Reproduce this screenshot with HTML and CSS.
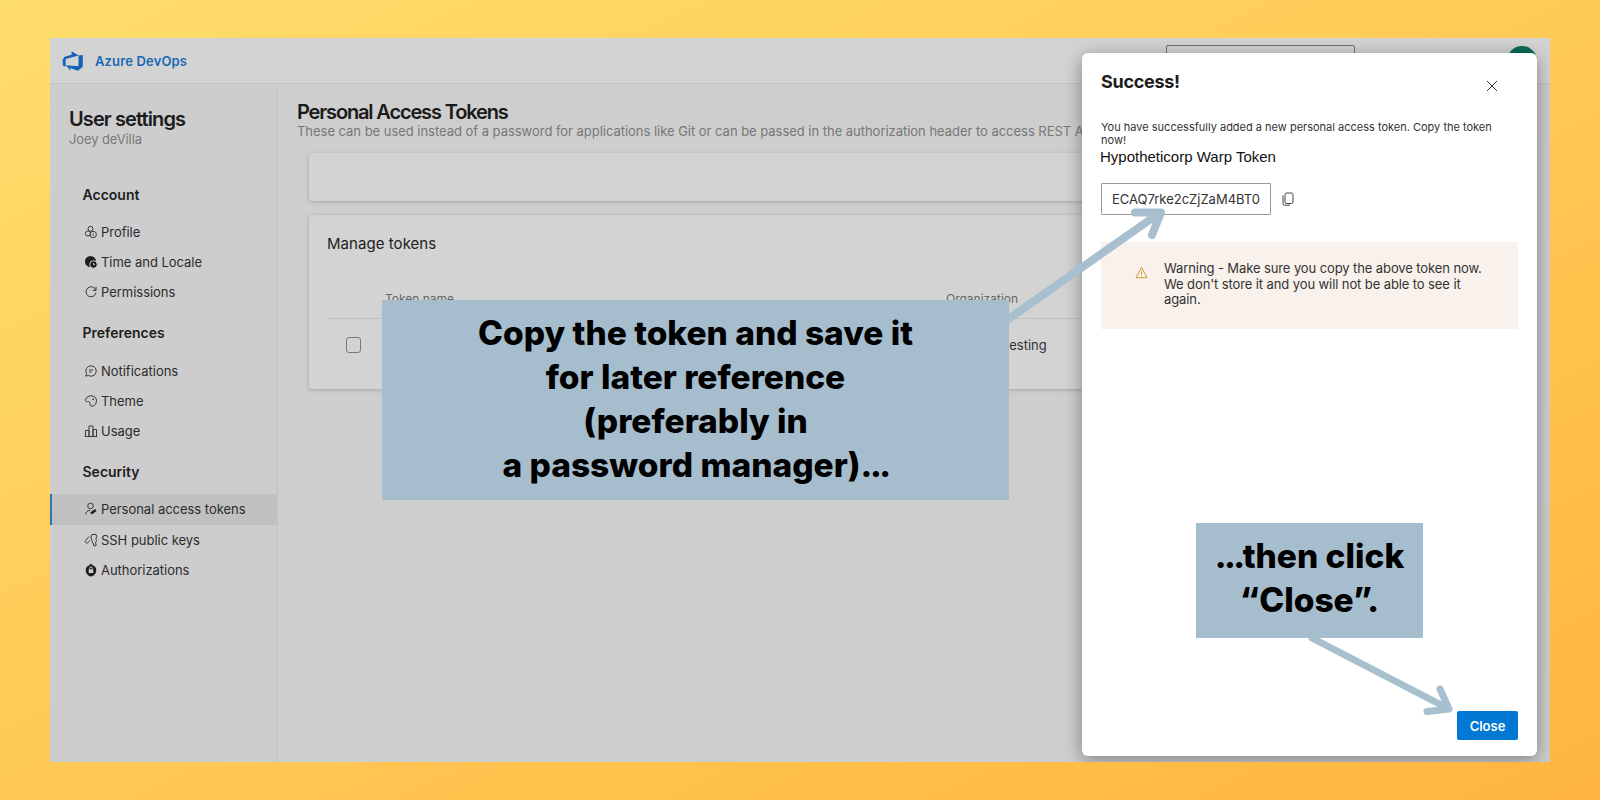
FILE: index.html
```html
<!DOCTYPE html>
<html lang="en">
<head>
    <meta charset="UTF-8">
    <meta name="viewport" content="width=device-width, initial-scale=1.0">
    <title>Personal Access Tokens</title>
    <link rel="stylesheet" href="styles.css">
</head>
<body>
    <div class="stage">
        <div class="window">
            <header class="topbar">
                <svg class="logo" viewBox="0 0 18 18"><path d="M17 4v9.74l-4 3.28-6.2-2.26V17l-3.51-4.59 10.23.8V4.44zm-3.41.49L7.85 1v2.91L2.27 5.55.6 7.72v4.93l2.4 1.06V7.39z"/></svg>
                <span class="brand">Azure DevOps</span>
                <div class="search"></div>
                <div class="avatar"></div>
            </header>

            <div class="page">
                <aside class="sidebar">
                    <h2>User settings</h2>
                    <p class="user">Joey deVilla</p>

                    <h3 class="nav-title first">Account</h3>
                    <a class="nav-item">
                        <svg viewBox="0 0 14 14"><circle cx="6.500" cy="3.800" r="2.500"/><circle cx="4" cy="8.500" r="2.600"/><circle cx="9.200" cy="9.500" r="3.200"/><path d="M9.200 8.500v2.200"/></svg>
                        Profile
                    </a>
                    <a class="nav-item">
                        <svg viewBox="0 0 14 14"><circle class="solid" cx="6.500" cy="6.500" r="5.500"/><circle class="solid halo" cx="9.500" cy="9.500" r="3.800"/><path class="light" d="M9.500 8v1.700h1.300"/></svg>
                        Time and Locale
                    </a>
                    <a class="nav-item">
                        <svg viewBox="0 0 14 14"><path d="M11.800 5.200A5 5 0 1 0 12 7.600"/><path d="M12 1.800v3.600H8.600"/></svg>
                        Permissions
                    </a>

                    <h3 class="nav-title">Preferences</h3>
                    <a class="nav-item">
                        <svg viewBox="0 0 14 14"><path d="M7 1.800a5.200 5.200 0 1 1-2.700 9.600L1.800 12.200l.8-2.500A5.200 5.200 0 0 1 7 1.800z"/><path d="M5 6h4M5 8h2.500"/></svg>
                        Notifications
                    </a>
                    <a class="nav-item">
                        <svg viewBox="0 0 14 14"><path d="M7.200 1.800C3.800 1.800 1.500 4 1.500 6.600c0 .9.9 1.300 1.800 1 1.400-.5 2.600.2 2.600 1.600 0 1.500.4 3 2 3 2.400 0 4.600-2.400 4.600-5.400 0-3-2.200-5-5.300-5z"/><circle class="solid" cx="9.200" cy="5.200" r=".8"/></svg>
                        Theme
                    </a>
                    <a class="nav-item">
                        <svg viewBox="0 0 14 14"><path d="M1.500 12.500V6.500h3.500v6M5 12.500V2h4v10.500M9 12.500V5.500h3.500v7M.8 12.500h12.400"/></svg>
                        Usage
                    </a>

                    <h3 class="nav-title">Security</h3>
                    <a class="nav-item active">
                        <svg viewBox="0 0 14 14"><circle cx="6.500" cy="4" r="2.800"/><path d="M1.800 12.500c0-2.600 1.800-4 4.400-4"/><path class="thick" d="M7 11.500l4.800-3.500"/></svg>
                        Personal access tokens
                    </a>
                    <a class="nav-item">
                        <svg viewBox="0 0 14 14"><path d="M8 1.500h4l.8 2-1 2.500.8 1.500-1 2 .5 3-2 .5-2.200-5.500-1-3z"/><path d="M5 3.500L1 8.500l2 2 2.800-3"/></svg>
                        SSH public keys
                    </a>
                    <a class="nav-item">
                        <svg viewBox="0 0 14 14"><path class="solid" d="M7 .6l1.600 1.700C10.800 2.800 12.300 4.800 12.300 7.200c0 3.100-2.400 5.800-5.300 6.200-2.900-.4-5.300-3.100-5.300-6.200 0-2.400 1.500-4.400 3.700-4.900z"/><rect class="cutout" x="4.700" y="6.300" width="4.600" height="3.700" rx=".5"/><path class="light" d="M5.600 6.200V5.300a1.400 1.400 0 0 1 2.800 0v.9"/></svg>
                        Authorizations
                    </a>
                </aside>

                <main class="content">
                    <h1>Personal Access Tokens</h1>
                    <p class="lead">These can be used instead of a password for applications like Git or can be passed in the authorization header to access REST APIs.</p>

                    <div class="card card-empty"></div>

                    <div class="card card-tokens">
                        <h4>Manage tokens</h4>
                        <div class="token-grid token-head">
                            <span></span>
                            <span>Token name</span>
                            <span>Organization</span>
                        </div>
                        <div class="token-grid token-row">
                            <span class="checkbox"></span>
                            <span></span>
                            <span>joey-dev-testing</span>
                        </div>
                    </div>
                </main>
            </div>

            <section class="modal">
                <div class="modal-head">
                    <h2>Success!</h2>
                    <svg class="close-x" viewBox="0 0 12 12"><path d="M1 1l10 10M11 1L1 11"/></svg>
                </div>
                <p class="modal-text">You have successfully added a new personal access token. Copy the token now!</p>
                <p class="token-name">Hypotheticorp Warp Token</p>
                <div class="token-line">
                    <div class="token-value">ECAQ7rke2cZjZaM4BT0</div>
                    <svg class="copy" viewBox="0 0 12 14"><rect x="3" y="1" width="8" height="10.500" rx="1.500"/><path d="M1 3.500v8A1.800 1.800 0 0 0 2.800 13.200H8"/></svg>
                </div>
                <div class="warning">
                    <svg viewBox="0 0 14 14"><path d="M7 1.600L13 12.600H1z"/><path d="M7 5.500v4M7 10.500v.8"/></svg>
                    <p>Warning - Make sure you copy the above token now. We don't store it and you will not be able to see it again.</p>
                </div>
                <button class="close-btn">Close</button>
            </section>
        </div>

        <svg class="arrows" viewBox="0 0 1600 800">
            <path d="M990 332L1158 214M1135 212.500L1161 212.500L1152 235"/>
            <path class="small" d="M1312 638L1447 708M1440 689L1449 709L1427 711.500"/>
        </svg>

        <div class="callout callout-big"><p>Copy the token and save it<br>for later reference<br>(preferably in<br>a password manager)<span class="dots">...</span></p></div>
        <div class="callout callout-small"><p><span class="dots">...</span>then click<br>“Close”.</p></div>
    </div>
</body>
</html>
```

FILE: styles.css
```css
* {
    box-sizing: border-box;
}

body {
    margin: 0;
    font-family: Inter, "Noto Sans", sans-serif;
}

h1, h2, h3, h4, p {
    margin: 0;
}

.stage {
    position: relative;
    width: 1600px;
    height: 800px;
    padding: 38px 50px;
    overflow: hidden;
    background: linear-gradient(155deg, #ffdd6c 0%, #ffca55 50%, #ffb53f 100%);
}

.window {
    position: relative;
    height: 724px;
    overflow: hidden;
    background: #cecece;
    display: flex;
    flex-direction: column;
}

/* top bar */
.topbar {
    height: 46px;
    flex-shrink: 0;
    display: flex;
    align-items: center;
    padding: 0 13px 0 12px;
    background: #d3d3d3;
    border-bottom: 1px solid #c2c2c2;
}

.logo {
    width: 22px;
    height: 22px;
    fill: #1463b3;
}

.brand {
    margin-left: 11px;
    font-size: 13px;
    font-weight: 600;
    letter-spacing: 0.15px;
    color: #1a68b4;
}

.search {
    margin-left: auto;
    width: 189px;
    height: 32px;
    border: 1px solid #6e6e6e;
    border-radius: 2px;
}

.avatar {
    margin-left: 152px;
    width: 30px;
    height: 30px;
    border-radius: 50%;
    background: #0b6a58;
}

.page {
    flex: 1;
    display: flex;
    min-height: 0;
}

/* sidebar */
.sidebar {
    width: 228px;
    flex-shrink: 0;
    padding-top: 23.5px;
    border-right: 1px solid #c4c4c4;
    background: #cdcdcd;
}

.sidebar h2 {
    margin-left: 19px;
    font-size: 20px;
    line-height: 23px;
    font-weight: 600;
    letter-spacing: -0.9px;
    color: #1c1c1c;
}

.user {
    margin-left: 19px;
    font-size: 13px;
    line-height: 16px;
    letter-spacing: -0.1px;
    color: #7a7a7a;
}

.nav-title {
    margin: 16px 0 12px 32.5px;
    font-size: 14px;
    line-height: 20px;
    font-weight: 600;
    color: #1e1e1e;
}

.nav-title.first {
    margin-top: 38px;
}

.nav-item {
    height: 30.3px;
    display: flex;
    align-items: center;
    gap: 3px;
    padding-left: 34px;
    font-size: 13px;
    letter-spacing: -0.03px;
    color: #2c2c2c;
}

.nav-item.active {
    background: #c1c1c1;
    box-shadow: inset 2px 0 0 #2f73b5;
}

.nav-item svg {
    width: 14px;
    height: 14px;
    fill: none;
    stroke: #3a3a3a;
    stroke-width: 1;
}

.nav-item .solid {
    fill: #1e1e1e;
    stroke: none;
}

.nav-item .halo {
    stroke: #cdcdcd;
    stroke-width: 1;
}

.nav-item .light {
    stroke: #cdcdcd;
}

.nav-item .cutout {
    fill: #cdcdcd;
    stroke: none;
}

.nav-item .thick {
    stroke: #1e1e1e;
    stroke-width: 2.4;
}

/* main column */
.content {
    flex: 1;
    min-width: 0;
    padding: 18px 20px 0 19px;
    overflow: hidden;
}

.content h1 {
    font-size: 20px;
    line-height: 20px;
    font-weight: 600;
    letter-spacing: -1.15px;
    color: #1a1a1a;
}

.lead {
    font-size: 13px;
    line-height: 18px;
    letter-spacing: -0.03px;
    white-space: nowrap;
    color: #777;
}

.card {
    margin-left: 12px;
    background: #d3d3d3;
    border-radius: 4px;
    box-shadow: 0 1px 4px rgba(0, 0, 0, 0.2);
}

.card-empty {
    height: 48px;
    margin-top: 13px;
}

.card-tokens {
    height: 174px;
    margin-top: 14px;
    padding: 19px 18px 0;
}

.card-tokens h4 {
    font-size: 15px;
    line-height: 20px;
    font-weight: 400;
    letter-spacing: 0.05px;
    color: #222;
}

.token-grid {
    display: grid;
    grid-template-columns: 58px 561px 1fr;
    align-items: center;
    font-size: 12px;
}

.token-head {
    height: 40px;
    margin-top: 25px;
    border-bottom: 1px solid #c0c0c0;
    color: #666;
}

.token-row {
    height: 52px;
    font-size: 13px;
    color: #333;
}

.checkbox {
    width: 15px;
    height: 16px;
    margin-left: 19px;
    border: 1px solid #777;
    border-radius: 3px;
}

/* dialog */
.modal {
    position: absolute;
    left: 1032px;
    top: 15px;
    width: 455px;
    height: 703px;
    display: flex;
    flex-direction: column;
    padding: 17px 19px 16px;
    background: #fff;
    border-radius: 6px;
    box-shadow: 0 4px 18px rgba(0, 0, 0, 0.38);
}

.modal-head {
    height: 43px;
    display: flex;
    justify-content: space-between;
    padding-right: 20px;
}

.modal-head h2 {
    font-size: 18px;
    line-height: 24px;
    font-weight: 700;
    letter-spacing: -0.3px;
    color: #1c1c1c;
}

.close-x {
    width: 12px;
    height: 12px;
    margin-top: 10px;
    fill: none;
    stroke: #333;
    stroke-width: 1;
}

.modal-text {
    margin-top: 8px;
    font-size: 11px;
    line-height: 13px;
    color: #333;
}

.token-name {
    margin-left: -1px;
    font-family: "Liberation Sans", Arial, sans-serif;
    font-size: 15px;
    line-height: 19px;
    color: #111;
}

.token-line {
    margin-top: 17px;
    display: flex;
    align-items: center;
    gap: 11px;
}

.token-value {
    width: 170px;
    height: 32px;
    display: flex;
    align-items: center;
    justify-content: center;
    border: 1px solid #999;
    border-radius: 1px;
    font-size: 13px;
    color: #333;
}

.copy {
    width: 12px;
    height: 14px;
    fill: none;
    stroke: #444;
    stroke-width: 1;
}

.warning {
    height: 87px;
    margin-top: 27px;
    display: flex;
    align-items: flex-start;
    gap: 16px;
    padding: 19px 24px 0 34px;
    background: #f9f1eb;
    font-size: 13px;
    line-height: 15.7px;
    letter-spacing: -0.1px;
    color: #333;
}

.warning svg {
    width: 13px;
    height: 13px;
    margin-top: 5px;
    flex-shrink: 0;
    fill: none;
    stroke: #c9912f;
    stroke-width: 1;
}

.close-btn {
    margin-top: auto;
    align-self: flex-end;
    width: 61px;
    height: 29px;
    padding: 0;
    border: none;
    border-radius: 2px;
    background: #0078d4;
    color: #fff;
    font-family: inherit;
    font-size: 13px;
    font-weight: 600;
}

/* annotations on top of the screenshot */
.arrows {
    position: absolute;
    left: 0;
    top: 0;
    width: 1600px;
    height: 800px;
    fill: none;
    stroke: #a7bfcf;
    stroke-width: 8;
    stroke-linecap: round;
    stroke-linejoin: round;
}

.arrows .small {
    stroke-width: 7;
}

.callout {
    position: absolute;
    display: flex;
    align-items: center;
    justify-content: center;
    text-align: center;
    background: #a6bdce;
    color: #000;
    font-size: 33.5px;
    line-height: 44px;
    font-weight: 800;
}

.dots {
    letter-spacing: -2.5px;
}

.callout-big {
    left: 382px;
    top: 300px;
    width: 627px;
    height: 200px;
    padding-bottom: 2px;
}

.callout-small {
    left: 1196px;
    top: 523px;
    width: 227px;
    height: 115px;
    padding-bottom: 6px;
}
```
